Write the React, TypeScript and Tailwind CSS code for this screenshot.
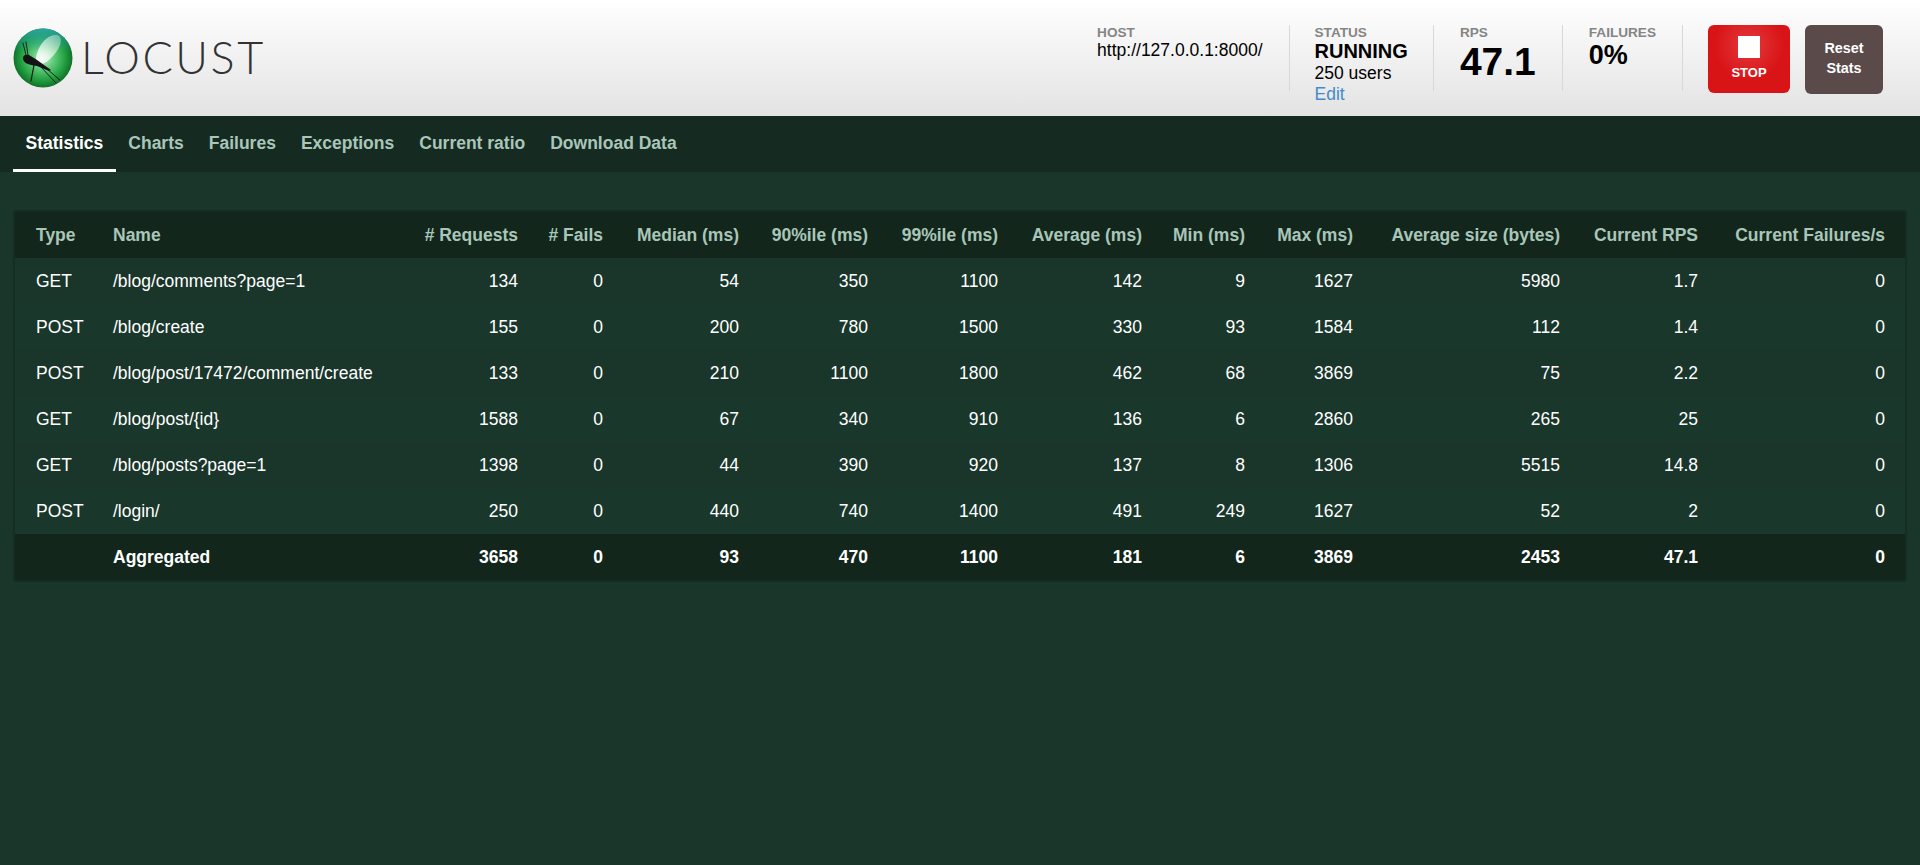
import { useId } from "react"

const rows = [
  ["GET", "/blog/comments?page=1", 134, 0, 54, 350, 1100, 142, 9, 1627, 5980, 1.7, 0],
  ["POST", "/blog/create", 155, 0, 200, 780, 1500, 330, 93, 1584, 112, 1.4, 0],
  ["POST", "/blog/post/17472/comment/create", 133, 0, 210, 1100, 1800, 462, 68, 3869, 75, 2.2, 0],
  ["GET", "/blog/post/{id}", 1588, 0, 67, 340, 910, 136, 6, 2860, 265, 25, 0],
  ["GET", "/blog/posts?page=1", 1398, 0, 44, 390, 920, 137, 8, 1306, 5515, 14.8, 0],
  ["POST", "/login/", 250, 0, 440, 740, 1400, 491, 249, 1627, 52, 2, 0],
]

const aggregated = ["", "Aggregated", 3658, 0, 93, 470, 1100, 181, 6, 3869, 2453, 47.1, 0]

const columns = [
  "# Requests",
  "# Fails",
  "Median (ms)",
  "90%ile (ms)",
  "99%ile (ms)",
  "Average (ms)",
  "Min (ms)",
  "Max (ms)",
  "Average size (bytes)",
  "Current RPS",
  "Current Failures/s",
]

const tabs = ["Statistics", "Charts", "Failures", "Exceptions", "Current ratio", "Download Data"]

function LogoBall() {
  const id = useId()
  return (
    <svg width="60" height="60" viewBox="0 0 60 60" className="shrink-0">
      <defs>
        <radialGradient id={`${id}ball`} cx="50%" cy="50%" r="52%">
          <stop offset="0%" stopColor="#c8f0cc" />
          <stop offset="35%" stopColor="#62cc7c" />
          <stop offset="72%" stopColor="#22a040" />
          <stop offset="100%" stopColor="#0c6a24" />
        </radialGradient>
        <linearGradient id={`${id}rim`} x1="0" y1="0" x2="0" y2="1">
          <stop offset="0%" stopColor="#2aa6a0" />
          <stop offset="40%" stopColor="#2aa6a0" stopOpacity="0" />
        </linearGradient>
        <linearGradient id={`${id}wing`} x1="1" y1="0" x2="0" y2="1">
          <stop offset="0%" stopColor="#ffffff" stopOpacity="0.3" />
          <stop offset="100%" stopColor="#ffffff" stopOpacity="0.95" />
        </linearGradient>
      </defs>
      <circle cx="30" cy="30" r="29.5" fill={`url(#${id}ball)`} />
      <circle cx="30" cy="30" r="29.5" fill={`url(#${id}rim)`} />
      <path d="M23 33C23 22 31 8 42 7C50 6 49 16 44 23C39 30 29 41 23 33Z" fill={`url(#${id}wing)`} />
      <path d="M10 30C10 27 13 26 16 27C18 28 21 30 24 32L38 42L36 43L24 38L18 37C14 36 10 34 10 30Z" fill="#141414" />
      <g stroke="#141414" fill="none" strokeLinecap="round">
        <path d="M13 27L10 15" strokeWidth="0.9" />
        <path d="M15 27L13 14" strokeWidth="0.9" />
        <path d="M21 37L18 53" strokeWidth="1.2" />
        <path d="M27 38L43 55" strokeWidth="0.9" />
        <path d="M34 41L47 52" strokeWidth="0.9" />
      </g>
    </svg>
  )
}

function StatBox({ label, narrow, children }: { label: string; narrow?: boolean; children: React.ReactNode }) {
  return (
    <div className={narrow ? "h-[66px] border-r border-[#d8d8d8] px-[25px]" : "h-[66px] border-r border-[#d8d8d8] px-[26px]"}>
      <div className="mt-[1px] text-[13.6px] leading-[13px] font-bold text-[#858585]">{label}</div>
      {children}
    </div>
  )
}

export default function App() {
  return (
    <div className="min-h-[865px] bg-[#1a362a] font-['Liberation_Sans',Arial,sans-serif] text-white">
      {/* top bar */}
      <header className="h-[116px] flex items-center justify-between bg-gradient-to-b from-white to-[#e3e3e3]">
        <div className="flex items-center pl-[13px] gap-[8px] mt-[-1px]">
          <LogoBall />
          <span className="font-['Lato',sans-serif] font-light text-[45px] leading-none tracking-[2.5px] text-[#333]">LOCUST</span>
        </div>
        <div className="flex items-start pr-[37px] pt-[25px] self-stretch text-black">
          <StatBox label="HOST">
            <div className="text-[17.5px] leading-[22px]">http://127.0.0.1:8000/</div>
          </StatBox>
          <StatBox label="STATUS" narrow>
            <div className="text-[20px] leading-[24px] font-bold">RUNNING</div>
            <div className="text-[17.5px] leading-[20px]">250 users</div>
            <a className="block text-[17.5px] leading-[22px] text-[#428bca]">Edit</a>
          </StatBox>
          <StatBox label="RPS">
            <div className="text-[39px] leading-[46px] font-bold">47.1</div>
          </StatBox>
          <StatBox label="FAILURES">
            <div className="text-[27px] leading-[32px] font-bold">0%</div>
          </StatBox>
          <button className="ml-[25px] w-[82px] h-[68px] rounded-[6px] bg-[radial-gradient(circle_at_50%_30%,#e33a3f,#d91416_55%)] text-white text-[13px] font-bold flex flex-col items-center">
            <span className="mt-[11px] w-[22px] h-[22px] bg-white" />
            <span className="mt-[7px] leading-[16px]">STOP</span>
          </button>
          <button className="ml-[15px] w-[78px] h-[69px] rounded-[6px] bg-[#5a4b4a] text-white text-[14.4px] leading-[20px] font-bold pb-[3px]">
            Reset
            <br />
            Stats
          </button>
        </div>
      </header>

      {/* tabs */}
      <nav className="h-[56px] bg-[#152a21] flex pl-[13px] text-[17.5px] font-bold text-[#a9c6b9]">
        {tabs.map((tab, i) => (
          <div
            key={tab}
            className={
              i === 0
                ? "h-[56px] px-[12.5px] leading-[55px] text-white border-b-[3px] border-white"
                : "h-[56px] px-[12.5px] leading-[55px]"
            }
          >
            {tab}
          </div>
        ))}
      </nav>

      {/* stats table */}
      <main className="pt-[38px] px-[13px]">
        <div className="border-2 border-[#162d23] rounded-[3px] w-[1894px]">
          <table className="w-[1890px] table-fixed border-collapse text-[17.5px] leading-[24px]">
            <colgroup>
              <col className="w-[88px]" />
              <col className="w-[307px]" />
              <col className="w-[118px]" />
              <col className="w-[85px]" />
              <col className="w-[136px]" />
              <col className="w-[129px]" />
              <col className="w-[130px]" />
              <col className="w-[144px]" />
              <col className="w-[103px]" />
              <col className="w-[108px]" />
              <col className="w-[207px]" />
              <col className="w-[138px]" />
              <col className="w-[197px]" />
            </colgroup>
            <thead>
              <tr className="h-[46px] bg-[#12261c] text-[#a9c6b9] font-bold">
                <th className="pl-[21px] pb-[1px] text-left">Type</th>
                <th className="pl-[10px] pb-[1px] text-left">Name</th>
                {columns.map((c, i) => (
                  <th key={c} className={i === columns.length - 1 ? "pr-[20px] pb-[1px] text-right whitespace-nowrap" : "pr-[10px] pb-[1px] text-right whitespace-nowrap"}>
                    {c}
                  </th>
                ))}
              </tr>
            </thead>
            <tbody>
              {rows.map((row, r) => (
                <tr key={r} className={r % 2 === 0 ? "h-[46px] bg-[#1a352a]" : "h-[46px] bg-[#1a372b]"}>
                  {row.map((cell, i) => (
                    <td
                      key={i}
                      className={
                        i === 0
                          ? "pl-[21px] pb-[1px]"
                          : i === 1
                            ? "pl-[10px] pb-[1px] whitespace-nowrap"
                            : i === 12
                              ? "pr-[20px] pb-[1px] text-right"
                              : "pr-[10px] pb-[1px] text-right"
                      }
                    >
                      {cell}
                    </td>
                  ))}
                </tr>
              ))}
              <tr className="h-[46px] bg-[#12261c] font-bold">
                {aggregated.map((cell, i) => (
                  <td
                    key={i}
                    className={
                      i === 0
                        ? "pl-[21px] pb-[1px]"
                        : i === 1
                          ? "pl-[10px] pb-[1px]"
                          : i === 12
                            ? "pr-[20px] pb-[1px] text-right"
                            : "pr-[10px] pb-[1px] text-right"
                    }
                  >
                    {cell}
                  </td>
                ))}
              </tr>
            </tbody>
          </table>
        </div>
      </main>
    </div>
  )
}
